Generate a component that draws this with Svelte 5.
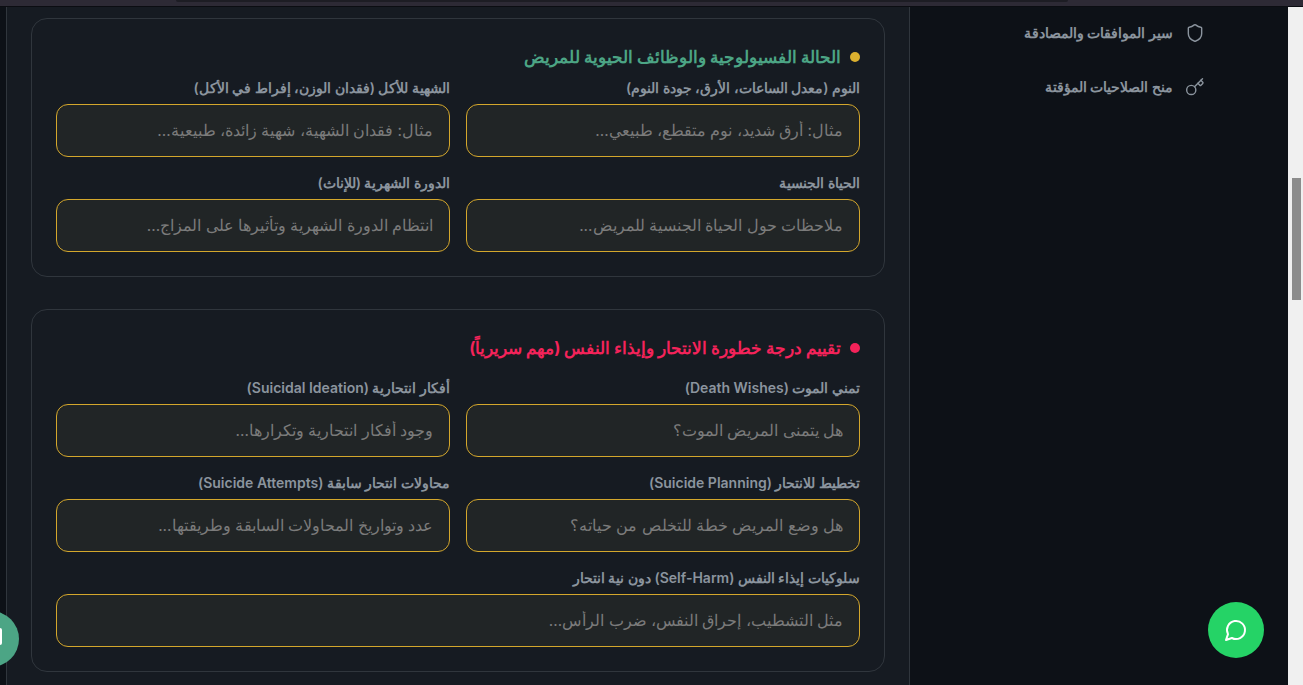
<script>
	let sections = [
		{
			title: "الحالة الفسيولوجية والوظائف الحيوية للمريض",
			tone: "calm",
			fields: [
				{ label: "النوم (معدل الساعات، الأرق، جودة النوم)", hint: "مثال: أرق شديد، نوم متقطع، طبيعي..." },
				{ label: "الشهية للأكل (فقدان الوزن، إفراط في الأكل)", hint: "مثال: فقدان الشهية، شهية زائدة، طبيعية..." },
				{ label: "الحياة الجنسية", hint: "ملاحظات حول الحياة الجنسية للمريض..." },
				{ label: "الدورة الشهرية (للإناث)", hint: "انتظام الدورة الشهرية وتأثيرها على المزاج..." }
			]
		},
		{
			title: "تقييم درجة خطورة الانتحار وإيذاء النفس (مهم سريرياً)",
			tone: "danger",
			fields: [
				{ label: "تمني الموت (Death Wishes)", hint: "هل يتمنى المريض الموت؟" },
				{ label: "أفكار انتحارية (Suicidal Ideation)", hint: "وجود أفكار انتحارية وتكرارها..." },
				{ label: "تخطيط للانتحار (Suicide Planning)", hint: "هل وضع المريض خطة للتخلص من حياته؟" },
				{ label: "محاولات انتحار سابقة (Suicide Attempts)", hint: "عدد وتواريخ المحاولات السابقة وطريقتها..." },
				{ label: "سلوكيات إيذاء النفس (Self-Harm) دون نية انتحار", hint: "مثل التشطيب، إحراق النفس، ضرب الرأس...", wide: true }
			]
		}
	];
</script>

<div class="page">
	<div class="topbar"><div class="notch"></div></div>
	<div class="shell">
		<div class="rail"></div>
		<main>
			{#each sections as section}
				<section class="card">
					<h3 class={section.tone}><span class="dot"></span>{section.title}</h3>
					<div class="grid">
						{#each section.fields as field}
							<label class:wide={field.wide}>
								<span>{field.label}</span>
								<input type="text" placeholder={field.hint} />
							</label>
						{/each}
					</div>
				</section>
			{/each}
		</main>
		<aside>
			<a class="link" href="#a">
				<svg viewBox="0 0 24 24"><path d="M20 13c0 5-3.5 7.5-7.66 8.95a1 1 0 0 1-.67-.01C7.5 20.5 4 18 4 13V6a1 1 0 0 1 1-1c2 0 4.5-1.2 6.24-2.72a1.17 1.17 0 0 1 1.52 0C14.51 3.81 17 5 19 5a1 1 0 0 1 1 1z"/></svg>
				<span>سير الموافقات والمصادقة</span>
			</a>
			<a class="link" href="#b">
				<svg viewBox="0 0 24 24"><path d="m15.5 7.5 2.3 2.3a1 1 0 0 0 1.4 0l2.1-2.1a1 1 0 0 0 0-1.4L19 4"/><path d="m21 2-9.6 9.6"/><circle cx="7.5" cy="15.5" r="5.5"/></svg>
				<span>منح الصلاحيات المؤقتة</span>
			</a>
		</aside>
		<div class="scrollbar"><div class="thumb"></div></div>
	</div>
	<button class="chat" aria-label="chat">
		<svg viewBox="0 0 24 24"><path d="M7.9 20A9 9 0 1 0 4 16.1L2 22Z"/></svg>
	</button>
	<div class="peek"><i></i></div>
</div>

<style>
	:global(body) {
		margin: 0;
		background: #0d1117;
	}
	.page {
		position: relative;
		display: flex;
		flex-direction: column;
		height: 685px;
		overflow: hidden;
		font-family: Inter, "Noto Sans", sans-serif;
	}
	.topbar {
		position: relative;
		height: 6px;
		background: #2d2a35;
		border-bottom: 1px solid #0b0d12;
		flex: none;
	}
	.notch {
		position: absolute;
		left: 176px;
		top: 0;
		width: 892px;
		height: 2px;
		background: #1d1d24;
		border-radius: 0 0 4px 4px;
	}
	.shell {
		display: flex;
		flex: 1;
		min-height: 0;
	}
	.rail {
		width: 6px;
		flex: none;
		background: #0d1117;
		border-right: 1px solid #30363d;
	}
	main {
		width: 902px;
		flex: none;
		box-sizing: border-box;
		padding: 11px 24px 0;
		background: #161b22;
		display: flex;
		flex-direction: column;
		gap: 32px;
	}
	.card {
		border: 1px solid #30363d;
		border-radius: 16px;
		padding: 24px;
		direction: rtl;
	}
	h3 {
		display: flex;
		align-items: center;
		gap: 9px;
		margin: 0 0 16px;
		font-size: 16.5px;
		line-height: 28px;
		font-weight: 700;
	}
	h3.calm {
		color: #4ca585;
		margin-bottom: 7px;
	}
	h3.danger { color: #f4235a; }
	.dot {
		width: 10px;
		height: 10px;
		border-radius: 50%;
	}
	.calm .dot { background: #dbb02f; }
	.danger .dot { background: #f4235a; }
	.grid {
		display: grid;
		grid-template-columns: 1fr 1fr;
		gap: 16px;
	}
	.wide { grid-column: 1 / -1; }
	label {
		display: flex;
		flex-direction: column;
		gap: 6px;
		font-size: 14px;
		line-height: 20px;
		font-weight: 600;
		color: #8b949e;
	}
	input {
		height: 53px;
		box-sizing: border-box;
		padding: 0 16px;
		border: 1px solid #d4a72c;
		border-radius: 12px;
		background: #212526;
		font: 400 15.5px Inter, "Noto Sans", sans-serif;
		color: #c9d1d9;
		direction: rtl;
	}
	input::placeholder { color: #7b7b7b; }
	aside {
		width: 379px;
		flex: none;
		box-sizing: border-box;
		background: #0d1117;
		border-left: 1px solid #30363d;
		padding: 14px 83px 0 16px;
		direction: rtl;
		display: flex;
		flex-direction: column;
		gap: 30px;
	}
	.link {
		display: flex;
		align-items: center;
		gap: 12px;
		font-size: 14.4px;
		line-height: 24px;
		font-weight: 600;
		color: #8b949e;
		text-decoration: none;
	}
	.link svg {
		width: 20px;
		height: 20px;
		fill: none;
		stroke: #8b949e;
		stroke-width: 1.7;
		stroke-linecap: round;
		stroke-linejoin: round;
	}
	.scrollbar {
		flex: 1;
		background: #f0f0f0;
		position: relative;
	}
	.thumb {
		position: absolute;
		top: 171px;
		left: 4px;
		width: 9px;
		height: 122px;
		background: #8c8c8c;
	}
	.chat {
		position: absolute;
		left: 1208px;
		top: 602px;
		width: 56px;
		height: 56px;
		border: 0;
		border-radius: 50%;
		background: #25d366;
		display: grid;
		place-items: center;
		padding: 0;
	}
	.chat svg {
		width: 24px;
		height: 24px;
		fill: none;
		stroke: #fff;
		stroke-width: 2;
		stroke-linecap: round;
		stroke-linejoin: round;
	}
	.peek {
		position: absolute;
		left: -37px;
		top: 611px;
		width: 56px;
		height: 56px;
		border-radius: 50%;
		background: #4ca585;
	}
	.peek i {
		position: absolute;
		left: 29px;
		top: 17px;
		width: 10px;
		height: 17px;
		background: #fff;
		border-radius: 2px;
	}
</style>
